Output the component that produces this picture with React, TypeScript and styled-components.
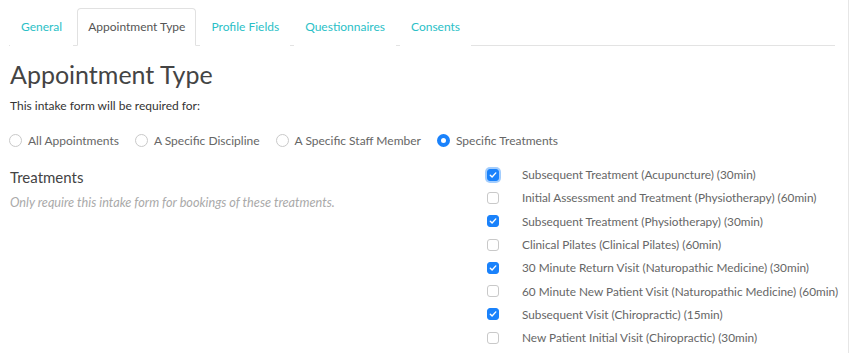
import * as React from "react";
import styled, { createGlobalStyle } from "styled-components";

const GlobalStyle = createGlobalStyle`
  body {
    margin: 0;
    background: #fff;
    font-family: "Lato", "Open Sans", sans-serif;
    color: #555;
  }
`;

const tabs = ["General", "Appointment Type", "Profile Fields", "Questionnaires", "Consents"];

const scopes = [
  { label: "All Appointments", checked: false },
  { label: "A Specific Discipline", checked: false },
  { label: "A Specific Staff Member", checked: false },
  { label: "Specific Treatments", checked: true },
];

const treatments = [
  { name: "Subsequent Treatment (Acupuncture) (30min)", checked: true, focus: true },
  { name: "Initial Assessment and Treatment (Physiotherapy) (60min)", checked: false },
  { name: "Subsequent Treatment (Physiotherapy) (30min)", checked: true },
  { name: "Clinical Pilates (Clinical Pilates) (60min)", checked: false },
  { name: "30 Minute Return Visit (Naturopathic Medicine) (30min)", checked: true },
  { name: "60 Minute New Patient Visit (Naturopathic Medicine) (60min)", checked: false },
  { name: "Subsequent Visit (Chiropractic) (15min)", checked: true },
  { name: "New Patient Initial Visit (Chiropractic) (30min)", checked: false },
];

function Checkbox({ checked, focus }: { checked: boolean; focus?: boolean }) {
  return (
    <CheckBox checked={checked} focus={focus}>
      {checked && (
        <svg width="8" height="8" viewBox="0 0 8 8">
          <path d="M1.3 4.2 L3.1 6 L6.8 1.9" fill="none" stroke="#fff" strokeWidth="1.4" strokeLinecap="round" strokeLinejoin="round" />
        </svg>
      )}
    </CheckBox>
  );
}

export default function App() {
  return (
    <Page>
      <GlobalStyle />
      <TabBar>
        {tabs.map((t) => (
          <Tab key={t} active={t === "Appointment Type"}>
            {t}
          </Tab>
        ))}
      </TabBar>

      <Title>Appointment Type</Title>
      <Lead>This intake form will be required for:</Lead>

      <RadioRow>
        {scopes.map((s) => (
          <RadioLabel key={s.label}>
            <RadioDot checked={s.checked} />
            {s.label}
          </RadioLabel>
        ))}
      </RadioRow>

      <Columns>
        <div>
          <SectionTitle>Treatments</SectionTitle>
          <Hint>Only require this intake form for bookings of these treatments.</Hint>
        </div>
        <TreatmentList>
          {treatments.map((t) => (
            <TreatmentRow key={t.name}>
              <Checkbox checked={t.checked} focus={t.focus} />
              <span>{t.name}</span>
            </TreatmentRow>
          ))}
        </TreatmentList>
      </Columns>
    </Page>
  );
}

const Page = styled.div`
  width: 849px;
  min-height: 353px;
  box-sizing: border-box;
  border-right: 1px solid #e6e6e6;
  padding: 8px 13px 0 9px;
`;

const TabBar = styled.div`
  display: flex;
  gap: 4px;
  padding-left: 1px;
  border-bottom: 1px solid #e3e3e3;
`;

const Tab = styled.div<{ active?: boolean }>`
  height: 36px;
  line-height: 36px;
  padding: 0 10px;
  font-size: 12px;
  color: ${(p) => (p.active ? "#555" : "#2bbfc7")};
  border: 1px solid ${(p) => (p.active ? "#e1e1e1" : "transparent")};
  border-bottom-color: ${(p) => (p.active ? "#fff" : "transparent")};
  border-radius: 4px 4px 0 0;
  margin-bottom: -1px;
  background: #fff;
`;

const Title = styled.h1`
  margin: 12px 0 0 1px;
  font-size: 25px;
  line-height: 32px;
  font-weight: 400;
  color: #444;
`;

const Lead = styled.p`
  margin: 8px 0 0 1px;
  font-size: 12px;
  line-height: 16px;
  color: #333;
`;

const RadioRow = styled.div`
  display: flex;
  align-items: center;
  gap: 16px;
  margin-top: 19px;
`;

const RadioLabel = styled.label`
  display: flex;
  align-items: center;
  gap: 6px;
  font-size: 12px;
  color: #666;
`;

const RadioDot = styled.span<{ checked?: boolean }>`
  width: 13px;
  height: 13px;
  box-sizing: border-box;
  border-radius: 50%;
  border: ${(p) => (p.checked ? "4.5px solid #1a82fb" : "1px solid #c9c9c9")};
  background: #fff;
`;

const Columns = styled.div`
  display: grid;
  grid-template-columns: 477px 1fr;
  margin-top: 15px;
`;

const SectionTitle = styled.div`
  margin: 5px 0 0 1px;
  font-size: 15px;
  line-height: 18px;
  color: #444;
`;

const Hint = styled.div`
  margin: 8px 0 0 1px;
  font-size: 12.7px;
  font-style: italic;
  color: #aaa;
`;

const TreatmentList = styled.div`
  display: flex;
  flex-direction: column;
`;

const TreatmentRow = styled.label`
  display: flex;
  align-items: center;
  height: 23.3px;
  font-size: 11.8px;
  white-space: nowrap;
  color: #666;
`;

const CheckBox = styled.span<{ checked: boolean; focus?: boolean }>`
  display: flex;
  flex: none;
  align-items: center;
  justify-content: center;
  width: 12px;
  height: 12px;
  box-sizing: border-box;
  margin: 0 23px 0 1px;
  border-radius: 3px;
  border: 1px solid ${(p) => (p.checked ? "#1a82fb" : "#c9c9c9")};
  background: ${(p) => (p.checked ? "#1a82fb" : "#fff")};
  box-shadow: ${(p) => (p.focus ? "0 0 0 2px rgba(26,130,251,0.4)" : "none")};
`;
